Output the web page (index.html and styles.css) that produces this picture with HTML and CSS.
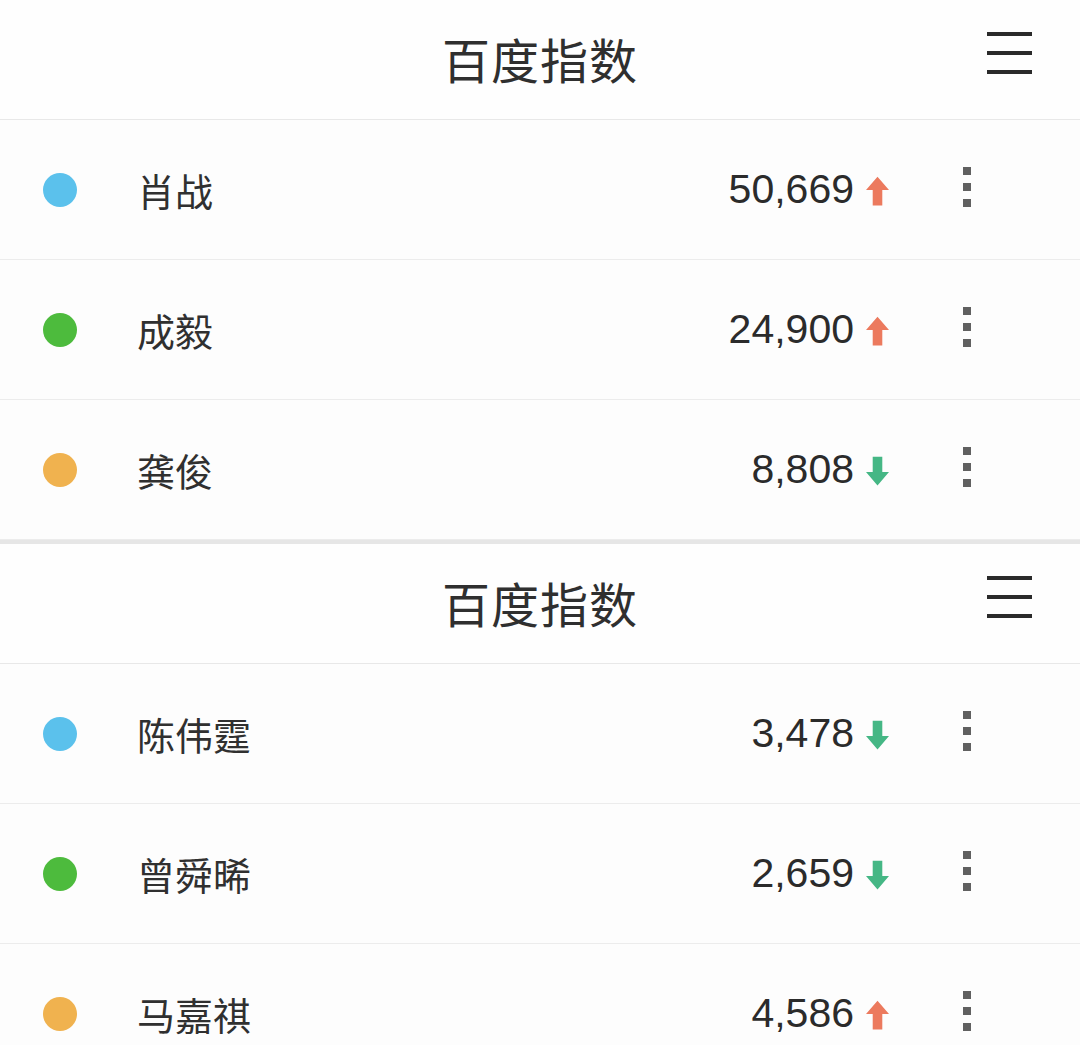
FILE: index.html
```html
<!DOCTYPE html>
<html lang="zh-CN">

<head>
    <meta charset="UTF-8">
    <meta name="viewport" content="width=device-width, initial-scale=1.0">
    <title>百度指数</title>
    <link rel="stylesheet" href="styles.css">
</head>

<body>
    <section class="card">
        <header class="card-head">
            <h1>百度指数</h1>
            <span class="menu"><i></i><i></i><i></i></span>
        </header>
        <ul class="rows">
            <li class="row">
                <span class="dot blue"></span>
                <span class="name">肖战</span>
                <span class="value">50,669</span>
                <svg class="arrow up" viewBox="0 0 24 30"><path d="M12 0 L24 14 L17 14 L17 30 L7 30 L7 14 L0 14 Z"/></svg>
                <span class="more"><i></i><i></i><i></i></span>
            </li>
            <li class="row">
                <span class="dot green"></span>
                <span class="name">成毅</span>
                <span class="value">24,900</span>
                <svg class="arrow up" viewBox="0 0 24 30"><path d="M12 0 L24 14 L17 14 L17 30 L7 30 L7 14 L0 14 Z"/></svg>
                <span class="more"><i></i><i></i><i></i></span>
            </li>
            <li class="row">
                <span class="dot orange"></span>
                <span class="name">龚俊</span>
                <span class="value">8,808</span>
                <svg class="arrow down" viewBox="0 0 24 30"><path d="M12 30 L24 16 L17 16 L17 0 L7 0 L7 16 L0 16 Z"/></svg>
                <span class="more"><i></i><i></i><i></i></span>
            </li>
        </ul>
    </section>

    <section class="card">
        <header class="card-head">
            <h1>百度指数</h1>
            <span class="menu"><i></i><i></i><i></i></span>
        </header>
        <ul class="rows">
            <li class="row">
                <span class="dot blue"></span>
                <span class="name">陈伟霆</span>
                <span class="value">3,478</span>
                <svg class="arrow down" viewBox="0 0 24 30"><path d="M12 30 L24 16 L17 16 L17 0 L7 0 L7 16 L0 16 Z"/></svg>
                <span class="more"><i></i><i></i><i></i></span>
            </li>
            <li class="row">
                <span class="dot green"></span>
                <span class="name">曾舜晞</span>
                <span class="value">2,659</span>
                <svg class="arrow down" viewBox="0 0 24 30"><path d="M12 30 L24 16 L17 16 L17 0 L7 0 L7 16 L0 16 Z"/></svg>
                <span class="more"><i></i><i></i><i></i></span>
            </li>
            <li class="row">
                <span class="dot orange"></span>
                <span class="name">马嘉祺</span>
                <span class="value">4,586</span>
                <svg class="arrow up" viewBox="0 0 24 30"><path d="M12 0 L24 14 L17 14 L17 30 L7 30 L7 14 L0 14 Z"/></svg>
                <span class="more"><i></i><i></i><i></i></span>
            </li>
        </ul>
    </section>
</body>

</html>
```

FILE: styles.css
```css
/* Base */
* {
    margin: 0;
    padding: 0;
    box-sizing: border-box;
}

body {
    font-family: "Noto Sans CJK SC", "Noto Sans", sans-serif;
    background-color: #fdfdfd;
    color: #333;
    width: 1080px;
    height: 1045px;
    overflow: hidden;
}

.card + .card {
    border-top: 4px solid #e6e6e6;
}

/* Header */
.card-head {
    position: relative;
    height: 120px;
    display: flex;
    align-items: center;
    justify-content: center;
    border-bottom: 1px solid #e8e8e8;
    background: #fefefe;
}

.card-head h1 {
    font-size: 48px;
    font-weight: 400;
    color: #2f2f2f;
    letter-spacing: 1px;
    margin-top: -4px;
}

.menu {
    position: absolute;
    right: 48px;
    top: 32px;
    width: 45px;
    display: flex;
    flex-direction: column;
    gap: 15px;
}

.menu i {
    display: block;
    height: 4px;
    background: #2a2a2a;
}

/* Rows */
.rows {
    list-style: none;
}

.row {
    height: 140px;
    display: flex;
    align-items: center;
    padding-left: 43px;
    border-bottom: 1px solid #ececec;
}

.dot {
    width: 34px;
    height: 34px;
    border-radius: 50%;
    flex-shrink: 0;
}

.dot.blue {
    background: #5bc1ec;
}

.dot.green {
    background: #4dbb3d;
}

.dot.orange {
    background: #f0b24f;
}

.name {
    flex: 1;
    margin-left: 60px;
    font-size: 38px;
    color: #303030;
}

.value {
    font-family: "Liberation Sans", Arial, sans-serif;
    font-size: 41px;
    color: #2b2b2b;
}

.arrow {
    width: 23px;
    height: 30px;
    margin-left: 12px;
    margin-top: 2px;
}

.arrow.up {
    fill: #ec7a5e;
}

.arrow.down {
    fill: #45b785;
}

.more {
    width: 8px;
    margin: -6px 109px 0 74px;
    display: flex;
    flex-direction: column;
    gap: 8px;
}

.more i {
    display: block;
    width: 8px;
    height: 8px;
    background: #606060;
}
```
